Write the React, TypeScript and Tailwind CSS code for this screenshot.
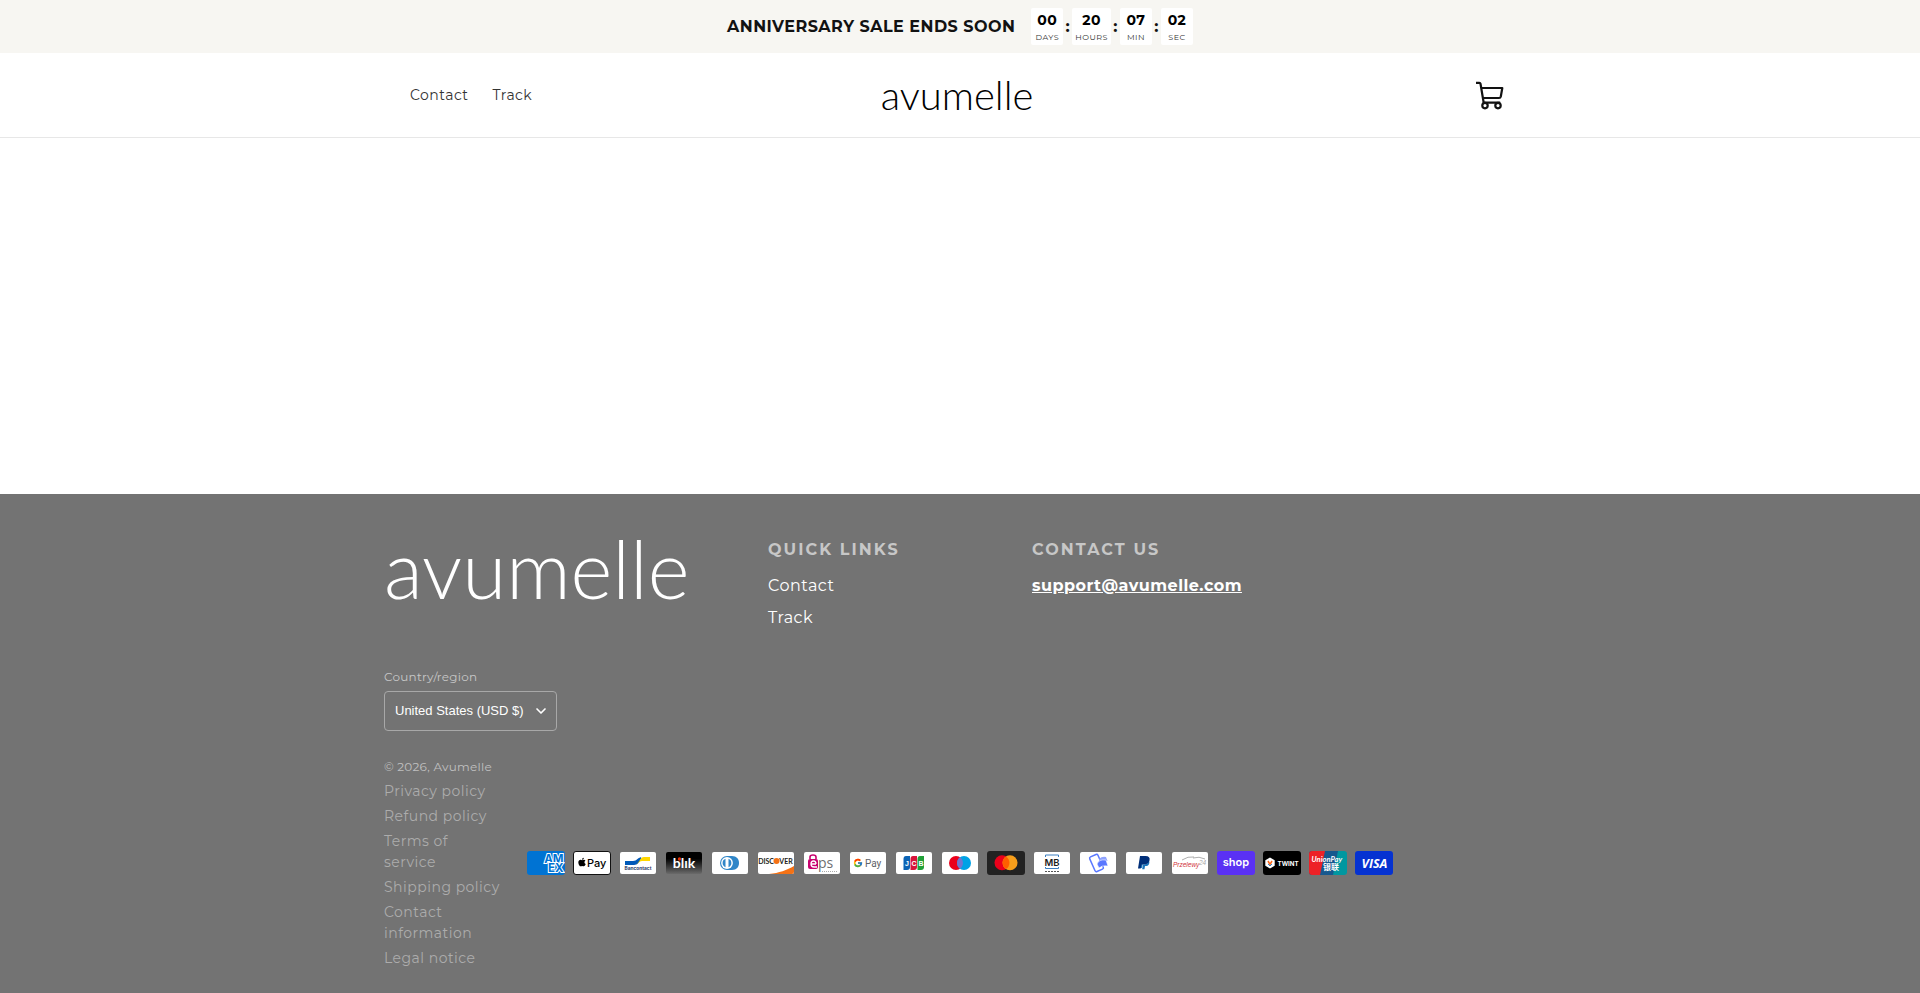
import { useState } from "react";
import type { ReactNode } from "react";
import { ChevronDown } from "lucide-react";
import { FaApple, FaPaypal } from "react-icons/fa";
import { FcGoogle } from "react-icons/fc";

interface CountdownUnit {
  value: string;
  label: string;
}

interface PaymentMethod {
  name: string;
  icon: ReactNode;
}

const countdown: CountdownUnit[] = [
  { value: "00", label: "DAYS" },
  { value: "20", label: "HOURS" },
  { value: "07", label: "MIN" },
  { value: "02", label: "SEC" },
];

const menuLinks = ["Contact", "Track"];

const policies = [
  "Privacy policy",
  "Refund policy",
  "Terms of service",
  "Shipping policy",
  "Contact information",
  "Legal notice",
];

const countries = ["United States (USD $)", "Germany (EUR €)", "Poland (PLN zł)"];

const WhiteCard = () => (
  <rect x="1" y="1" width="36" height="22" rx="2" fill="#fff" />
);

const payments: PaymentMethod[] = [
  {
    name: "American Express",
    icon: (
      <>
        <rect width="38" height="24" rx="3" fill="#0073d3" />
        <g
          fill="#0073d3"
          stroke="#fff"
          strokeWidth="2"
          paintOrder="stroke"
          fontFamily="Inter, sans-serif"
          fontWeight="700"
          fontSize="11.500"
          textAnchor="end"
        >
          <text x="36.500" y="12">AM</text>
          <text x="36.500" y="21">EX</text>
        </g>
      </>
    ),
  },
  {
    name: "Apple Pay",
    icon: (
      <>
        <rect x="0.500" y="0.500" width="37" height="23" rx="2.500" fill="#fff" stroke="#111" />
        <FaApple x="4" y="6" size={10} color="#000" />
        <text x="14" y="16" fontSize="11" fontWeight="500" fontFamily="Inter, sans-serif" fill="#000">
          Pay
        </text>
      </>
    ),
  },
  {
    name: "Bancontact",
    icon: (
      <>
        <WhiteCard />
        <path d="M6 10h8c4 0 5-4 9-4h-1v2c-2 5-5 6-8 6H6z" fill="#005ab9" />
        <path d="M31 6v4h-8c-3 0-4 3-7 4 4-1 5-8 9-8z" fill="#ffd700" />
        <text x="19" y="19" fontSize="4.800" fontWeight="700" textAnchor="middle" fontFamily="Inter, sans-serif" fill="#1e3764">
          Bancontact
        </text>
      </>
    ),
  },
  {
    name: "BLIK",
    icon: (
      <>
        <defs>
          <linearGradient id="blik" x1="0" y1="0" x2="0" y2="1">
            <stop offset="0.3" stopColor="#000" />
            <stop offset="1" stopColor="#6b6b6b" />
          </linearGradient>
        </defs>
        <rect x="1" y="1" width="36" height="22" rx="2" fill="url(#blik)" />
        <text x="19" y="17" fontSize="14" fontWeight="700" textAnchor="middle" fontFamily="Lato, sans-serif" fill="#fff">
          blık
        </text>
        <circle cx="14.500" cy="8" r="1.700" fill="#e52f08" />
      </>
    ),
  },
  {
    name: "Diners Club",
    icon: (
      <>
        <WhiteCard />
        <path d="M16 5h5c4.500 0 7 3 7 7s-2.500 7-7 7h-5z" fill="#3086c8" />
        <circle cx="16" cy="12" r="7" fill="#3086c8" />
        <circle cx="16" cy="12" r="5.900" fill="#fff" />
        <path d="M14.500 7.800a4.500 4.500 0 0 0 0 8.400zM17.500 7.800a4.500 4.500 0 0 1 0 8.400z" fill="#3086c8" />
      </>
    ),
  },
  {
    name: "Discover",
    icon: (
      <>
        <WhiteCard />
        <path d="M12 23c10-1 18-4 25-8v6a2 2 0 0 1-2 2z" fill="#f47216" />
        <circle cx="19.500" cy="10" r="3" fill="#f47216" />
        <g fontSize="7" fontWeight="700" fontFamily="Lato, sans-serif" fill="#231f20">
          <text x="17" y="12.500" textAnchor="end">DISC</text>
          <text x="22.300" y="12.500">VER</text>
        </g>
      </>
    ),
  },
  {
    name: "EPS",
    icon: (
      <>
        <WhiteCard />
        <path d="M7 8V6q0-2 3-2t3 2v2" fill="none" stroke="#c8036f" strokeWidth="1.600" />
        <rect x="5" y="8" width="10" height="10" rx="2" fill="#c8036f" />
        <path d="M13 13H8q0-3 2.500-3t2.500 3M8 13q0 3 3 3h3" fill="none" stroke="#fff" strokeWidth="1.300" />
        <text x="15" y="17" fontSize="14" fontFamily="Open Sans, sans-serif" fill="#6f6f6f">
          ps
        </text>
        <path d="M19 20.500h15" stroke="#aaa" strokeDasharray="1 1" />
      </>
    ),
  },
  {
    name: "Google Pay",
    icon: (
      <>
        <WhiteCard />
        <FcGoogle x="4" y="7" size={10} />
        <text x="16" y="16" fontSize="10" fontFamily="Roboto, sans-serif" fill="#5f6368">
          Pay
        </text>
      </>
    ),
  },
  {
    name: "JCB",
    icon: (
      <>
        <WhiteCard />
        <path d="M11 5h4v11a3 3 0 0 1-3 3H8.500V8q0-3 2.500-3z" fill="#0b63b5" />
        <path d="M18 5h4v11a3 3 0 0 1-3 3h-3.500V8q0-3 2.500-3z" fill="#d7153a" />
        <path d="M25 5h4v11a3 3 0 0 1-3 3h-3.500V8q0-3 2.500-3z" fill="#21a038" />
        <g fontSize="7" fontWeight="700" fontFamily="Liberation Sans, sans-serif" fill="#fff" textAnchor="middle">
          <text x="12" y="14.500">J</text>
          <text x="19" y="14.500">C</text>
          <text x="26" y="14.500">B</text>
        </g>
      </>
    ),
  },
  {
    name: "Maestro",
    icon: (
      <>
        <WhiteCard />
        <circle cx="15" cy="12" r="7" fill="#eb001b" />
        <circle cx="23" cy="12" r="7" fill="#00a2e5" />
        <path d="M19 6.300a7 7 0 0 1 0 11.400 7 7 0 0 1 0-11.400z" fill="#7375cf" />
      </>
    ),
  },
  {
    name: "Mastercard",
    icon: (
      <>
        <rect width="38" height="24" rx="3" fill="#222" />
        <circle cx="15" cy="11.800" r="7.500" fill="#eb001b" />
        <circle cx="23" cy="11.800" r="7.500" fill="#f79e1b" />
        <path d="M19 5.500a7.500 7.500 0 0 1 0 12.600 7.500 7.500 0 0 1 0-12.600z" fill="#ff5f00" />
      </>
    ),
  },
  {
    name: "MB Way",
    icon: (
      <>
        <WhiteCard />
        <path d="M12.500 6V4h13v2M12.500 16v1.500h13V16" fill="none" stroke="#3c7fc0" />
        <text x="19" y="14.500" fontSize="9.500" fontWeight="600" textAnchor="middle" fontFamily="Inter, sans-serif" fill="#1d1d1b">
          MB
        </text>
        <path d="M12 20.500h14" stroke="#555" strokeDasharray="2 1" />
      </>
    ),
  },
  {
    name: "MobilePay",
    icon: (
      <>
        <WhiteCard />
        <rect x="13" y="4" width="9" height="16" rx="1.500" transform="rotate(-24 17.500 12)" fill="none" stroke="#5a78ff" strokeWidth="1.500" />
        <path d="M20 8q3-3 7-2l1.500 4q-5-1-8 2z" fill="#8fa3ff" />
        <path d="M18 13q2-5 9-4l2 6q-6-1-9 2z" fill="#5a78ff" stroke="#fff" strokeWidth="0.600" />
      </>
    ),
  },
  {
    name: "PayPal",
    icon: (
      <>
        <WhiteCard />
        <FaPaypal x="13" y="6" size={13} color="#1a75bb" />
        <path d="M15 5h5.500q5 0 4 4.500-1 4-6 4h-2l-.8 4H13z" fill="#002f79" />
      </>
    ),
  },
  {
    name: "Przelewy24",
    icon: (
      <>
        <WhiteCard />
        <path d="M11 9q6-4 12-3M22 7q6-2 12 1" fill="none" stroke="#999" strokeWidth="0.800" />
        <text x="2" y="16" fontSize="6.500" fontStyle="italic" fontFamily="Liberation Sans, sans-serif" fill="#d13239">
          Przelewy
        </text>
        <text x="28" y="14" fontSize="6.500" fontStyle="italic" fontFamily="Liberation Sans, sans-serif" fill="#aaa">
          24
        </text>
      </>
    ),
  },
  {
    name: "Shop Pay",
    icon: (
      <>
        <rect width="38" height="24" rx="3" fill="#5a31f4" />
        <text x="19" y="15" fontSize="11" fontWeight="600" textAnchor="middle" fontFamily="Inter, sans-serif" fill="#fff">
          shop
        </text>
      </>
    ),
  },
  {
    name: "TWINT",
    icon: (
      <>
        <rect width="38" height="24" rx="3" fill="#000" />
        <path d="M7 6.500l4.700 2.700v5.600L7 17.500l-4.700-2.700V9.200z" fill="#fff" />
        <path d="M5 10l2 3.500L9 10" fill="none" stroke="#ff6a1c" strokeWidth="1.600" />
        <path d="M5 13l2 2 2-2" fill="none" stroke="#2a8ed8" strokeWidth="1" />
        <text x="14.500" y="14.500" fontSize="6.200" fontWeight="700" fontFamily="Inter, sans-serif" fill="#fff">
          TWINT
        </text>
      </>
    ),
  },
  {
    name: "Union Pay",
    icon: (
      <>
        <rect width="38" height="24" rx="3" fill="#0097a0" />
        <path d="M3 0h26l-5 24H3a3 3 0 0 1-3-3V3a3 3 0 0 1 3-3z" fill="#16588e" />
        <path d="M3 0h13l-5 24H3a3 3 0 0 1-3-3V3a3 3 0 0 1 3-3z" fill="#ed2127" />
        <text x="2.500" y="11" fontSize="7.500" fontWeight="700" fontStyle="italic" fontFamily="Lato, sans-serif" fill="#fff">
          UnionPay
        </text>
        <text x="14" y="19" fontSize="8" fontWeight="700" fontFamily="Noto Sans CJK SC, sans-serif" fill="#fff">
          银联
        </text>
      </>
    ),
  },
  {
    name: "Visa",
    icon: (
      <>
        <rect width="38" height="24" rx="3" fill="#0532d1" />
        <text x="19.500" y="16.500" fontSize="12.500" fontWeight="700" fontStyle="italic" textAnchor="middle" fontFamily="Open Sans, sans-serif" fill="#fff">
          VISA
        </text>
      </>
    ),
  },
];

function CartIcon() {
  return (
    <svg viewBox="0 0 44 44" className="size-11" fill="none" stroke="#121212" strokeWidth="2.200" strokeLinejoin="round">
      <path d="M8 9.800h3.300q1 0 1.200 1L15.700 29.700h16.500" />
      <path d="M13.200 15h21.100l-1.500 8.500q-.3 1.500-1.800 1.500H15" />
      <circle cx="17" cy="32.600" r="2.700" />
      <circle cx="30" cy="32.600" r="2.700" />
    </svg>
  );
}

export default function App() {
  const [country, setCountry] = useState(countries[0]);

  return (
    <div className="min-h-screen flex flex-col bg-white text-[#121212] tracking-[0.03em] font-['Montserrat','Inter',sans-serif]">
      {/* ANNOUNCEMENT */}
      <section className="bg-[#f7f6f2] py-2 flex items-center justify-center gap-4">
        <p className="text-base font-bold">ANNIVERSARY SALE ENDS SOON</p>

        <div className="flex items-center">
          {countdown.map((unit, index) => (
            <div key={unit.label} className="flex items-center">
              {index > 0 && (
                <span className="w-[9px] text-center text-base leading-none font-bold">:</span>
              )}
              <div className="min-w-8 h-[37px] px-[3px] rounded-xs bg-white flex flex-col items-center justify-center gap-1">
                <span className="text-sm leading-4 font-bold text-black">{unit.value}</span>
                <span className="text-[8px] leading-[10px] text-[#333]">{unit.label}</span>
              </div>
            </div>
          ))}
        </div>
      </section>

      {/* HEADER */}
      <header className="border-b border-[#e7e7e7]">
        <div className="max-w-[1200px] mx-auto pl-[50px] pr-12 h-21 grid grid-cols-[1fr_auto_1fr] items-center">
          <nav className="flex gap-6 text-sm text-[#333]">
            {menuLinks.map((link) => (
              <a key={link} href="#">
                {link}
              </a>
            ))}
          </nav>

          <a href="#" className="pr-2 font-['Lato',sans-serif] font-light text-[40px] leading-none tracking-normal text-black">
            avumelle
          </a>

          <button aria-label="Cart" className="justify-self-end">
            <CartIcon />
          </button>
        </div>
      </header>

      <main className="min-h-[356px]" />

      {/* FOOTER */}
      <footer className="flex-1 bg-[#737373] text-white pt-11 pb-5">
        <div className="max-w-[1152px] mx-auto">
          <div className="grid grid-cols-[16fr_11fr_21fr]">
            <div className="font-['Lato',sans-serif] font-light text-[80px] leading-[60px] tracking-normal">
              avumelle
            </div>

            <div>
              <h2 className="text-base leading-6 font-bold tracking-[0.13em] text-[#c7c7c7]">QUICK LINKS</h2>
              <ul className="mt-2">
                {menuLinks.map((link) => (
                  <li key={link} className="leading-8">
                    <a href="#">{link}</a>
                  </li>
                ))}
              </ul>
            </div>

            <div>
              <h2 className="text-base leading-6 font-bold tracking-[0.13em] text-[#c7c7c7]">CONTACT US</h2>
              <a href="mailto:support@avumelle.com" className="inline-block mt-2 leading-8 font-bold underline">
                support@avumelle.com
              </a>
            </div>
          </div>

          {/* LOCALIZATION */}
          <div className="mt-8 flex flex-col items-start gap-[3px]">
            <label htmlFor="country" className="text-xs leading-[22px] tracking-[0.02em] text-[#c7c7c7]">
              Country/region
            </label>
            <div className="relative">
              <select
                id="country"
                value={country}
                onChange={(e) => setCountry(e.target.value)}
                className="appearance-none h-10 w-[173px] pl-2.5 pr-8 rounded-sm border border-[#a8a8a8] bg-transparent text-[13px] tracking-normal font-['Liberation_Sans',sans-serif]"
              >
                {countries.map((item) => (
                  <option key={item}>{item}</option>
                ))}
              </select>
              <ChevronDown size={16} strokeWidth={2.5} className="absolute right-2 top-3 pointer-events-none" />
            </div>
          </div>

          {/* POLICIES + PAYMENTS */}
          <div className="mt-6 flex items-center gap-[25px]">
            <div className="w-[118px] shrink-0">
              <small className="block text-xs leading-6 tracking-[0.02em] text-[#c0c0c0]">© 2026, Avumelle</small>
              <ul className="text-sm leading-[21px] text-[#acacac]">
                {policies.map((policy) => (
                  <li key={policy} className="py-0.5">
                    <a href="#">{policy}</a>
                  </li>
                ))}
              </ul>
            </div>

            <ul className="flex flex-wrap gap-2 tracking-normal">
              {payments.map((payment) => (
                <li key={payment.name}>
                  <svg viewBox="0 0 38 24" width="38" height="24" role="img" aria-label={payment.name}>
                    {payment.icon}
                  </svg>
                </li>
              ))}
            </ul>
          </div>
        </div>
      </footer>
    </div>
  );
}
